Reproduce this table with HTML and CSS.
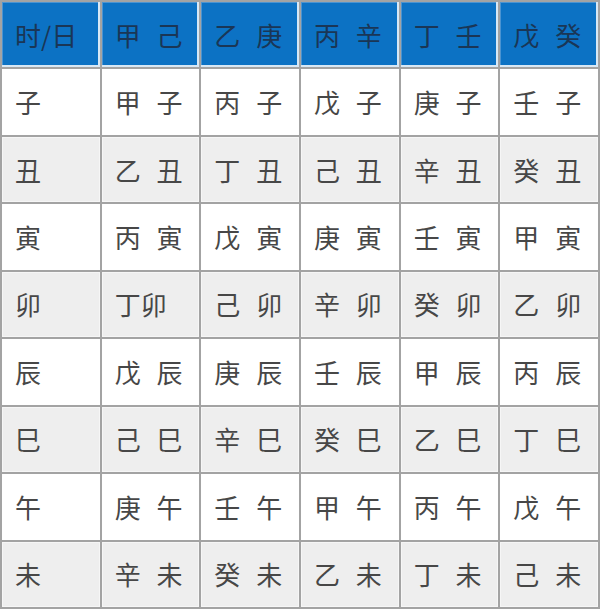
FILE: index.html
```html
<!DOCTYPE html>
<html lang="zh-CN">
<head>
<meta charset="utf-8">
<title>时/日 干支表</title>
<link rel="stylesheet" href="styles.css">
</head>
<body>
<div class="table">
  <div class="cell head">时/日</div><div class="cell head">甲 己</div><div class="cell head">乙 庚</div><div class="cell head">丙 辛</div><div class="cell head">丁 壬</div><div class="cell head">戊 癸</div>

  <div class="cell">子</div><div class="cell">甲 子</div><div class="cell">丙 子</div><div class="cell">戊 子</div><div class="cell">庚 子</div><div class="cell">壬 子</div>

  <div class="cell alt">丑</div><div class="cell alt">乙 丑</div><div class="cell alt">丁 丑</div><div class="cell alt">己 丑</div><div class="cell alt">辛 丑</div><div class="cell alt">癸 丑</div>

  <div class="cell">寅</div><div class="cell">丙 寅</div><div class="cell">戊 寅</div><div class="cell">庚 寅</div><div class="cell">壬 寅</div><div class="cell">甲 寅</div>

  <div class="cell alt">卯</div><div class="cell alt">丁卯</div><div class="cell alt">己 卯</div><div class="cell alt">辛 卯</div><div class="cell alt">癸 卯</div><div class="cell alt">乙 卯</div>

  <div class="cell">辰</div><div class="cell">戊 辰</div><div class="cell">庚 辰</div><div class="cell">壬 辰</div><div class="cell">甲 辰</div><div class="cell">丙 辰</div>

  <div class="cell alt">巳</div><div class="cell alt">己 巳</div><div class="cell alt">辛 巳</div><div class="cell alt">癸 巳</div><div class="cell alt">乙 巳</div><div class="cell alt">丁 巳</div>

  <div class="cell">午</div><div class="cell">庚 午</div><div class="cell">壬 午</div><div class="cell">甲 午</div><div class="cell">丙 午</div><div class="cell">戊 午</div>

  <div class="cell alt">未</div><div class="cell alt">辛 未</div><div class="cell alt">癸 未</div><div class="cell alt">乙 未</div><div class="cell alt">丁 未</div><div class="cell alt">己 未</div>
</div>
</body>
</html>
```

FILE: styles.css
```css
html, body {
  margin: 0;
  padding: 0;
  background: #ffffff;
}

.table {
  box-sizing: border-box;
  width: 600px;
  height: 609px;
  display: grid;
  grid-template-columns: repeat(6, 1fr);
  grid-template-rows: repeat(9, 1fr);
  gap: 2px;
  padding: 2px;
  background: #a3a3a3;
  font-family: "Noto Sans CJK SC", "Noto Sans CJK JP", sans-serif;
  font-size: 26px;
  color: #474747;
}

.cell {
  display: flex;
  align-items: center;
  padding-left: 13px;
  background: #ffffff;
  white-space: pre;
  word-spacing: 10px;
  line-height: 1;
}

.cell.alt {
  background: #eeeeee;
  box-shadow: inset 0 0 0 1px #f6f6f6;
}

.cell.head {
  background: #0c72c4;
  color: #1a3656;
  box-shadow: inset -2px -2px 0 #d8e8f5, inset 1px 1px 0 #4b94d2;
}
```
